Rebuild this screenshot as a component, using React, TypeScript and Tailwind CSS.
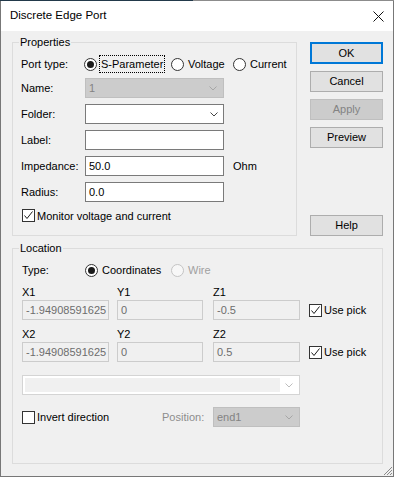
import React from "react";

const FONT = "font-['Liberation_Sans',Arial,sans-serif]";

function Chevron({ color = "#5a5a5a" }: { color?: string }) {
  return (
    <svg width="8" height="5" viewBox="0 0 8 5">
      <path d="M0.5 0.5 L4 4 L7.5 0.5" fill="none" stroke={color} strokeWidth="1" />
    </svg>
  );
}

function CheckMark() {
  return (
    <svg width="11" height="11" viewBox="0 0 11 11">
      <path d="M1.5 5.5 L4 8.5 L9.5 1.5" fill="none" stroke="#1a1a1a" strokeWidth="1" />
    </svg>
  );
}

function Radio({
  checked,
  disabled,
  label,
  focus,
  className = "",
}: {
  checked?: boolean;
  disabled?: boolean;
  label: string;
  focus?: boolean;
  className?: string;
}) {
  return (
    <div className={`flex items-center h-[20px] whitespace-nowrap ${className}`}>
      <span
        className={`w-[13px] h-[13px] rounded-full border shrink-0 flex items-center justify-center ${
          disabled ? "border-[#c4c4c4] bg-[#f7f7f7]" : "border-[#333333] bg-white"
        }`}
      >
        {checked && <span className="w-[7px] h-[7px] rounded-full bg-[#1a1a1a]" />}
      </span>
      <span
        className={`ml-[2px] px-[1px] leading-[16px] border ${
          focus ? "border-dotted border-black" : "border-transparent"
        } ${disabled ? "text-[#a0a0a0]" : "text-black"}`}
      >
        {label}
      </span>
    </div>
  );
}

function Checkbox({ checked, label, className = "" }: { checked?: boolean; label: string; className?: string }) {
  return (
    <div className={`flex items-center whitespace-nowrap ${className}`}>
      <span className="w-[13px] h-[13px] border border-[#333333] bg-white shrink-0 flex items-center justify-center">
        {checked && <CheckMark />}
      </span>
      <span className="ml-[2px] leading-[16px]">{label}</span>
    </div>
  );
}

function TextInput({ value, className = "" }: { value: string; className?: string }) {
  return (
    <div
      className={`h-[20px] border border-[#7a7a7a] bg-white flex items-center pl-[3px] text-black ${className}`}
    >
      {value}
    </div>
  );
}

function DisabledInput({ value, className = "" }: { value: string; className?: string }) {
  return (
    <div
      className={`h-[20px] border border-[#cccccc] bg-[#f0f0f0] flex items-center pl-[3px] text-[#6d6d6d] overflow-hidden whitespace-nowrap ${className}`}
    >
      {value}
    </div>
  );
}

function DisabledCombo({ value, className = "" }: { value: string; className?: string }) {
  return (
    <div
      className={`h-[20px] border border-[#bfbfbf] bg-[#cccccc] flex items-center justify-between pl-[3px] pr-[6px] text-[#838383] ${className}`}
    >
      <span>{value}</span>
      <Chevron color="#a6a6a6" />
    </div>
  );
}

function Combo({ className = "" }: { className?: string }) {
  return (
    <div
      className={`h-[20px] border border-[#7a7a7a] bg-white flex items-center justify-end pr-[5px] ${className}`}
    >
      <Chevron color="#444444" />
    </div>
  );
}

function Button({
  label,
  primary,
  disabled,
  className = "",
}: {
  label: string;
  primary?: boolean;
  disabled?: boolean;
  className?: string;
}) {
  return (
    <div
      className={`w-[73px] flex items-center justify-center ${
        primary
          ? "h-[22px] border-2 border-[#0078d7] bg-[#e1e1e1] text-black"
          : disabled
          ? "h-[21px] border border-[#bfbfbf] bg-[#cccccc] text-[#838383]"
          : "h-[21px] border border-[#adadad] bg-[#e1e1e1] text-black"
      } ${className}`}
    >
      {label}
    </div>
  );
}

function GroupBox({ title, className = "", children }: { title: string; className?: string; children: React.ReactNode }) {
  return (
    <div className={`relative border border-[#dcdcdc] ${className}`}>
      <span className="absolute left-[6px] top-[-9px] px-[1px] bg-[#f0f0f0] leading-[16px]">{title}</span>
      {children}
    </div>
  );
}

export default function App() {
  return (
    <div className={`${FONT} text-[11px] text-black w-[394px] h-[477px] flex flex-col bg-[#f0f0f0]`}>
      {/* top edge */}
      <div className="flex h-[1px] shrink-0">
        <div className="w-[193px] bg-[#22394a]" />
        <div className="flex-1 bg-[#8c8c8c]" />
      </div>
      <div className="flex-1 flex flex-col border-l border-r border-b border-[#777777]">
        {/* title bar */}
        <div className="h-[30px] bg-white flex items-center justify-between pl-[9px] pr-[9px] shrink-0">
          <span className="text-[11.5px]">Discrete Edge Port</span>
          <svg width="11" height="11" viewBox="0 0 11 11">
            <path d="M0.5 0.5 L10.5 10.5 M10.5 0.5 L0.5 10.5" stroke="#111" strokeWidth="1" />
          </svg>
        </div>
        {/* client */}
        <div className="relative flex-1 flex flex-col pl-[11px] pt-[11px]">
          <div className="flex">
            <GroupBox title="Properties" className="w-[285px] h-[194px] pl-[8px] pt-[11px]">
              <div className="flex items-center h-[20px]">
                <span className="w-[63px]">Port type:</span>
                <Radio checked focus label="S-Parameter" className="w-[87px]" />
                <Radio label="Voltage" className="w-[62px]" />
                <Radio label="Current" />
              </div>
              <div className="flex items-center mt-[4px]">
                <span className="w-[64px]">Name:</span>
                <DisabledCombo value="1" className="w-[139px]" />
              </div>
              <div className="flex items-center mt-[6px]">
                <span className="w-[64px]">Folder:</span>
                <Combo className="w-[139px]" />
              </div>
              <div className="flex items-center mt-[6px]">
                <span className="w-[64px]">Label:</span>
                <TextInput value="" className="w-[139px]" />
              </div>
              <div className="flex items-center mt-[6px]">
                <span className="w-[64px]">Impedance:</span>
                <TextInput value="50.0" className="w-[139px]" />
                <span className="ml-[9px]">Ohm</span>
              </div>
              <div className="flex items-center mt-[6px]">
                <span className="w-[64px]">Radius:</span>
                <TextInput value="0.0" className="w-[139px]" />
              </div>
              <Checkbox checked label="Monitor voltage and current" className="mt-[6px] ml-[1px] h-[15px]" />
            </GroupBox>
            <div className="ml-[13px] flex flex-col">
              <Button primary label="OK" />
              <Button label="Cancel" className="mt-[7px]" />
              <Button disabled label="Apply" className="mt-[7px]" />
              <Button label="Preview" className="mt-[7px]" />
              <Button label="Help" className="mt-auto" />
            </div>
          </div>
          <GroupBox title="Location" className="mt-[12px] w-[371px] h-[216px] pl-[9px] pt-[11px]">
            <div className="flex items-center h-[20px]">
              <span className="w-[63px]">Type:</span>
              <Radio checked label="Coordinates" className="w-[86px]" />
              <Radio disabled label="Wire" />
            </div>
            <div className="flex mt-[4px] h-[16px] items-center">
              <span className="w-[95px]">X1</span>
              <span className="w-[96px]">Y1</span>
              <span>Z1</span>
            </div>
            <div className="flex items-center">
              <DisabledInput value="-1.94908591625" className="w-[87px]" />
              <DisabledInput value="0" className="w-[86px] ml-[8px]" />
              <DisabledInput value="-0.5" className="w-[87px] ml-[10px]" />
              <Checkbox checked label="Use pick" className="ml-[9px]" />
            </div>
            <div className="flex mt-[6px] h-[16px] items-center">
              <span className="w-[95px]">X2</span>
              <span className="w-[96px]">Y2</span>
              <span>Z2</span>
            </div>
            <div className="flex items-center">
              <DisabledInput value="-1.94908591625" className="w-[87px]" />
              <DisabledInput value="0" className="w-[86px] ml-[8px]" />
              <DisabledInput value="0.5" className="w-[87px] ml-[10px]" />
              <Checkbox checked label="Use pick" className="ml-[9px]" />
            </div>
            <div className="mt-[13px] w-[278px] h-[20px] border border-[#d4d4d4] bg-white flex items-stretch p-[2px]">
              <div className="flex-1 bg-[#f0f0f0]" />
              <div className="w-[17px] flex items-center justify-center">
                <Chevron color="#bdbdbd" />
              </div>
            </div>
            <div className="mt-[12px] flex items-center h-[20px]">
              <Checkbox label="Invert direction" className="w-[140px]" />
              <span className="w-[51px] text-[#8d8d8d]">Position:</span>
              <DisabledCombo value="end1" className="w-[87px]" />
            </div>
          </GroupBox>
          {/* resize grip */}
          <svg className="absolute right-0 bottom-0" width="12" height="12" viewBox="0 0 12 12">
            <path d="M11 3 L3 11 M11 6 L6 11 M11 9 L9 11" stroke="#8a8a8a" strokeWidth="1" />
          </svg>
        </div>
      </div>
    </div>
  );
}
